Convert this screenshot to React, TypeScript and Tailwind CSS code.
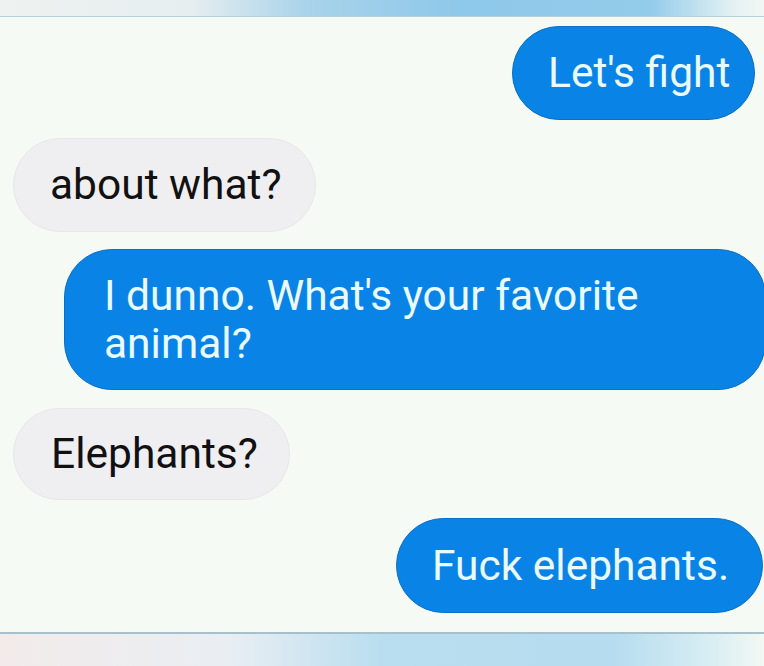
export default function App() {
  return (
    <div className="w-[764px] h-[666px] overflow-hidden bg-[#f5faf4] flex flex-col font-[Roboto,'Liberation_Sans',sans-serif]">
      <div className="h-[17px] shrink-0 bg-[linear-gradient(to_right,#eef2f0_0%,#e6eef0_25%,#a9d3ea_40%,#8ec8ea_60%,#93cbea_85%,#e4f1f3_96%,#f2f7f4_100%)] border-b border-[#b9cfd8]" />
      <div className="flex flex-col pt-[9px]">
        <div className="self-end mr-[9px] w-[243px] h-[94px] rounded-full bg-[#0984e6] border border-[#0b6fc2] flex items-center pl-[35px] text-[42.5px] text-[#e9fbff] whitespace-nowrap">
          Let's fight
        </div>
        <div className="mt-[18px] ml-[13px] w-[303px] h-[94px] rounded-full bg-[#efeff1] border border-[#e6e8e8] flex items-center pl-[36px] text-[42.5px] text-[#111111] whitespace-nowrap">
          about what?
        </div>
        <div className="mt-[17px] ml-[64px] w-[702px] h-[141px] rounded-[48px] bg-[#0984e6] border border-[#0b6fc2] flex items-center pl-[39px] text-[42.5px] leading-[48px] text-[#e9fbff]">
          <div>
            I dunno. What's your favorite
            <br />
            animal?
          </div>
        </div>
        <div className="mt-[18px] ml-[13px] w-[277px] h-[92px] rounded-full bg-[#efeff1] border border-[#e6e8e8] flex items-center pl-[37px] text-[42.5px] text-[#111111] whitespace-nowrap">
          Elephants?
        </div>
        <div className="mt-[18px] self-end mr-[1px] w-[367px] h-[95px] rounded-full bg-[#0984e6] border border-[#0b6fc2] flex items-center pl-[35px] text-[42.5px] text-[#e9fbff] whitespace-nowrap">
          Fuck elephants.
        </div>
      </div>
      <div className="mt-auto h-[34px] shrink-0 border-t-2 border-[#a8bfcc] bg-[linear-gradient(to_right,#f3ebea_0%,#e9eef3_30%,#b9deef_50%,#b5dcef_80%,#d8eef3_93%,#f3f8f4_100%)]" />
    </div>
  );
}
